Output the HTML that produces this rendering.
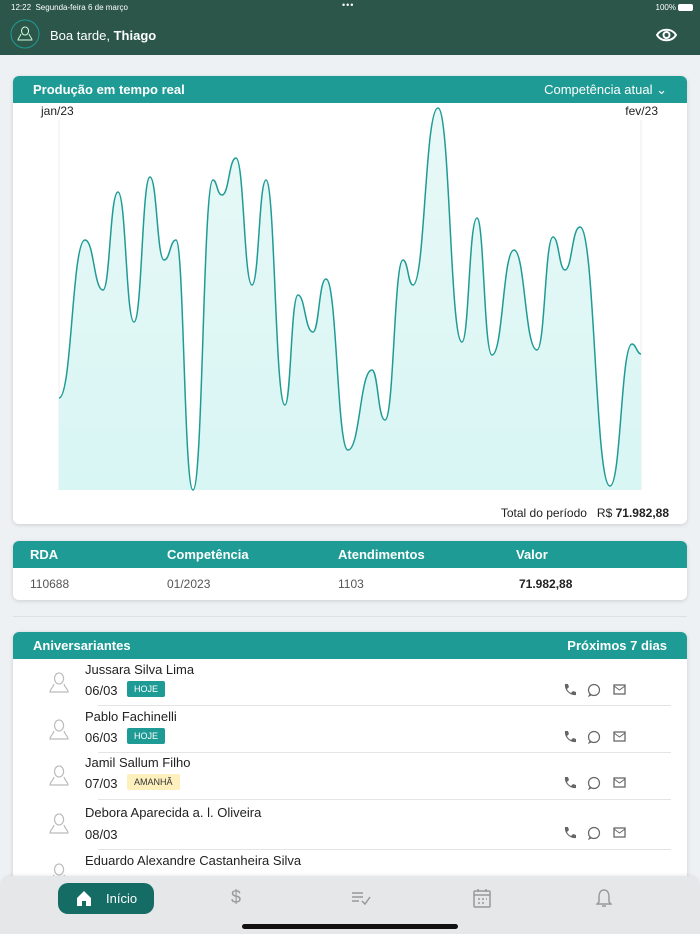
<!DOCTYPE html><html><head><meta charset="utf-8"><style>
*{margin:0;padding:0;box-sizing:border-box}
body{width:700px;height:934px;overflow:hidden;background:#eef1f4;font-family:"Liberation Sans",sans-serif;position:relative;color:#222}
.top{position:absolute;left:0;top:0;width:700px;height:55px;background:#2b5649;color:#fff}
.card{position:absolute;left:13px;width:674px;background:#fff;border-radius:6px;box-shadow:0 1px 4px rgba(0,0,0,.15);overflow:hidden}
.hd{background:#1f9b95;color:#fff;height:27px;font-size:13px;font-weight:bold;display:flex;align-items:center;justify-content:space-between;padding:0 20px}
.row{position:absolute;left:0;width:674px;height:47px}
.name{position:absolute;left:72px;top:3px;font-size:13px}
.dt{position:absolute;left:72px;top:24px;font-size:13px}
.tag{position:absolute;left:114px;top:22px;font-size:9px;padding:3px 7px;border-radius:2px}
.av{position:absolute;left:36px;top:12px}
.ic{position:absolute;top:22px;left:550px}
.ln{position:absolute;left:85px;right:16px;bottom:0;border-bottom:1px solid #e4e4e4}
</style></head><body>
<div class="top">
<div style="position:absolute;left:11px;top:3px;font-size:8px">12:22 &nbsp;Segunda-feira 6 de março</div>
<div style="position:absolute;left:342px;top:0px;font-size:9px;letter-spacing:1px">•••</div>
<div style="position:absolute;right:24px;top:3px;font-size:8px">100%</div>
<div style="position:absolute;right:7px;top:4px;width:15px;height:7px;background:#fff;border-radius:2px"></div>
<svg style="position:absolute;left:10px;top:19px" width="30" height="30"><circle cx="15" cy="15" r="14" fill="none" stroke="#1f9b95" stroke-width="1"/><path d="M15 8a3.5 4 0 1 0 .1 0M11 15c-1 3-3 4-3 6h14c0-2-2-3-3-6" fill="none" stroke="#cfd" stroke-width="1"/></svg>
<div style="position:absolute;left:50px;top:28px;font-size:13px">Boa tarde, <b>Thiago</b></div>
<svg style="position:absolute;left:656px;top:28px" width="21" height="14"><path d="M1 7C5 0 16 0 20 7C16 14 5 14 1 7Z" fill="none" stroke="#fff" stroke-width="2"/><circle cx="10.5" cy="7" r="3" fill="none" stroke="#fff" stroke-width="2"/></svg>
</div>
<div class="card" style="top:76px;height:448px">
<div class="hd"><span>Produção em tempo real</span><span style="font-weight:normal">Competência atual ⌄</span></div>
<div style="position:absolute;left:28px;top:28px;font-size:12px">jan/23</div>
<div style="position:absolute;right:29px;top:28px;font-size:12px">fev/23</div>
<svg style="position:absolute;left:-13px;top:-76px" width="700" height="524">
<defs><linearGradient id="g" x1="0" y1="0" x2="0" y2="1"><stop offset="0" stop-color="#e8f8f7"/><stop offset="1" stop-color="#d8f6f4"/></linearGradient></defs>
<line x1="59" y1="120" x2="59" y2="490" stroke="#eee"/><line x1="641" y1="120" x2="641" y2="490" stroke="#eee"/>
<path d="M59,398 C72,398 72,240 85,240 C94,240 94,290 103,290 C110,290 110,192 118,192 C126,192 126,322 134,322 C142,322 142,177 150,177 C157,177 157,260 164,260 C170,260 170,240 176,240 C184,240 184,490 193,490 C203,490 203,180 213,180 C217,180 217,195 222,195 C229,195 229,158 236,158 C244,158 244,285 252,285 C259,285 259,180 266,180 C275,180 275,405 285,405 C291,405 291,295 298,295 C305,295 305,332 313,332 C319,332 319,279 326,279 C337,279 337,450 348,450 C360,450 360,370 372,370 C378,370 378,420 385,420 C394,420 394,260 403,260 C408,260 408,285 413,285 C425,285 425,108 438,108 C450,108 450,342 462,342 C469,342 469,218 477,218 C484,218 484,355 492,355 C503,355 503,250 514,250 C525,250 525,350 537,350 C545,350 545,237 553,237 C559,237 559,270 565,270 C572,270 572,227 580,227 C595,227 595,486 610,486 C621,486 621,344 632,344 C636,344 637,354 641,354 L641,490 L59,490 Z" fill="url(#g)" stroke="none"/>
<path d="M59,398 C72,398 72,240 85,240 C94,240 94,290 103,290 C110,290 110,192 118,192 C126,192 126,322 134,322 C142,322 142,177 150,177 C157,177 157,260 164,260 C170,260 170,240 176,240 C184,240 184,490 193,490 C203,490 203,180 213,180 C217,180 217,195 222,195 C229,195 229,158 236,158 C244,158 244,285 252,285 C259,285 259,180 266,180 C275,180 275,405 285,405 C291,405 291,295 298,295 C305,295 305,332 313,332 C319,332 319,279 326,279 C337,279 337,450 348,450 C360,450 360,370 372,370 C378,370 378,420 385,420 C394,420 394,260 403,260 C408,260 408,285 413,285 C425,285 425,108 438,108 C450,108 450,342 462,342 C469,342 469,218 477,218 C484,218 484,355 492,355 C503,355 503,250 514,250 C525,250 525,350 537,350 C545,350 545,237 553,237 C559,237 559,270 565,270 C572,270 572,227 580,227 C595,227 595,486 610,486 C621,486 621,344 632,344 C636,344 637,354 641,354" fill="none" stroke="#1f9b95" stroke-width="1.5"/>
</svg>
<div style="position:absolute;right:18px;top:430px;font-size:12px">Total do período &nbsp; R$ <b>71.982,88</b></div>
</div>
<div class="card" style="top:541px;height:59px">
<div class="hd" style="justify-content:flex-start;padding:0"><span style="position:absolute;left:17px">RDA</span><span style="position:absolute;left:154px">Competência</span><span style="position:absolute;left:325px">Atendimentos</span><span style="position:absolute;left:503px">Valor</span></div>
<div style="font-size:12px;color:#555;position:absolute;top:36px;left:17px">110688</div>
<div style="font-size:12px;color:#555;position:absolute;top:36px;left:154px">01/2023</div>
<div style="font-size:12px;color:#555;position:absolute;top:36px;left:325px">1103</div>
<div style="font-size:12px;font-weight:bold;position:absolute;top:36px;left:506px">71.982,88</div>
</div>
<div style="position:absolute;left:13px;right:13px;top:616px;border-top:1px solid #dde0e3"></div>
<div class="card" style="top:632px;height:260px;border-radius:6px 6px 0 0">
<div class="hd"><span>Aniversariantes</span><span>Próximos 7 dias</span></div>
<div id="rows"></div>
</div>
<div style="position:absolute;left:0;top:876px;width:700px;height:58px;background:#e6e7e9;border-radius:12px 12px 0 0;box-shadow:0 -1px 3px rgba(0,0,0,.08)">
<div style="position:absolute;left:58px;top:7px;width:96px;height:31px;background:#146c64;border-radius:10px;color:#fff;font-size:13px"><svg style="position:absolute;left:18px;top:7px" width="16" height="17"><path d="M1 8L8 1L15 8V16H10V11H6V16H1Z" fill="#fff"/></svg><span style="position:absolute;left:48px;top:8px">Início</span></div>
<div style="position:absolute;left:231px;top:11px;color:#999;font-size:18px">$</div>
<svg style="position:absolute;left:351px;top:15px" width="20" height="14"><path d="M1 2H12M1 6H12M1 10H8M11 10L14 13L19 6" stroke="#999" stroke-width="1.5" fill="none"/></svg>
<svg style="position:absolute;left:473px;top:12px" width="18" height="20"><rect x="1" y="3" width="16" height="16" rx="1" fill="none" stroke="#999" stroke-width="1.5"/><path d="M1 7H17M5 1V4M13 1V4M5 11h2M9 11h2M13 11h1M5 15h2M9 15h2" stroke="#999" stroke-width="1.5"/></svg>
<svg style="position:absolute;left:596px;top:12px" width="16" height="20"><path d="M8 2C4 2 3 6 3 9V14L1 16H15L13 14V9C13 6 12 2 8 2ZM6 18H10" fill="none" stroke="#999" stroke-width="1.5"/></svg>
<div style="position:absolute;left:242px;top:48px;width:216px;height:5px;border-radius:3px;background:#111"></div>
</div>
<script>
var d=[["Jussara Silva Lima","06/03","HOJE",0,47],["Pablo Fachinelli","06/03","HOJE",47,47],["Jamil Sallum Filho","07/03","AMANHÃ",93,48],["Debora Aparecida a. l. Oliveira","08/03","",141,50],["Eduardo Alexandre Castanheira Silva","","",191,40]];
var av='<svg width="20" height="24"><path d="M10 2a4.5 5.5 0 1 0 .1 0M5 13c-1 4-4 5-4 8h18c0-3-3-4-4-8" fill="none" stroke="#bbb" stroke-width="1.2"/></svg>';
var ic='<svg width="80" height="14"><path d="M2 1L5 1L6 4L4 6C5 8 6 9 8 10L10 8L13 9L13 12C7 13 1 7 2 1Z" fill="#666"/><circle cx="31" cy="7" r="5.5" fill="none" stroke="#666" stroke-width="1.2"/><path d="M28 12L26 13L27 11" stroke="#666" fill="none"/><rect x="51" y="2" width="11" height="9" fill="none" stroke="#666" stroke-width="1.3"/><path d="M51 3L56.5 7L62 3" stroke="#666" fill="none"/></svg>';
var h='';d.forEach(function(r,i){h+='<div class="row" style="top:'+(27+r[3])+'px;height:'+r[4]+'px"><div class="av">'+av+'</div><div class="name"'+(i==3?' style="top:5px"':'')+'>'+r[0]+'</div>'+(r[1]?'<div class="dt" style="top:'+(i==3?27:24)+'px">'+r[1]+'</div><div class="ic" style="top:'+(i==3?26:24)+'px">'+ic+'</div><div class="ln"></div>':'')+(r[2]?'<div class="tag" style="'+(r[2]=="HOJE"?'background:#1f9b95;color:#fff':'background:#fdf0bd;color:#333')+'">'+r[2]+'</div>':'')+'</div>'});
document.getElementById('rows').innerHTML=h;
</script>
</body></html>
